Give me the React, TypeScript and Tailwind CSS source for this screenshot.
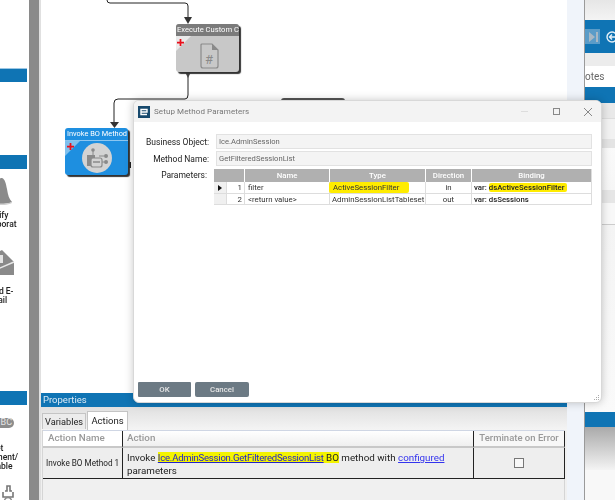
const font = { fontFamily: 'Roboto, "Noto Sans", sans-serif' };

function ClippedLabel({ lines, className }: { lines: string[]; className: string }) {
  return (
    <div className={`w-[60px] -ml-[33px] text-center text-[8.5px] leading-[9px] font-medium text-[#222] blur-[0.3px] ${className}`}>
      {lines.map((l) => (
        <div key={l}>{l}</div>
      ))}
    </div>
  );
}

function LeftPanel() {
  return (
    <div className="w-[27px] shrink-0 overflow-hidden bg-white">
      <div className="mt-[68px] h-[14px] bg-[#0f74b4] border-t border-[#9cc7e4]" />
      <div className="mt-[73px] h-[14px] bg-[#0f74b4]" />
      <svg className="mt-[9px] block" width="27" height="27" viewBox="0 0 27 27">
        <path d="M-14 24 C-8 20 -7 14 -6 8 C-5 3 -1 0 2 0 C5 1 6 6 7 11 C8 17 9 21 12 24 C6 27 -8 27 -14 24Z" fill="#8b8b8b" />
        <path d="M-10 24 C-3 26 6 26 12 24 L12 25 C6 28 -6 28 -10 25Z" fill="#d0d0d0" />
      </svg>
      <ClippedLabel lines={["Notify", "Collaborat", "e"]} className="mt-[6px]" />
      <svg className="mt-[12px] block" width="27" height="27" viewBox="0 0 27 27">
        <path d="M-14 8 L2 0 L14 12 L14 25 L-14 25Z" fill="#8a8a8a" />
        <path d="M-14 10 L0 18 L14 12" fill="none" stroke="#e8e8e8" strokeWidth="1.5" />
        <rect x="-6" y="5" width="9" height="8" fill="#e4e4e4" />
      </svg>
      <div className="mt-[10px] w-[60px] -ml-[31px] text-center text-[8.5px] leading-[9px] font-medium text-[#222] blur-[0.3px]">
        <div>Send E-</div>
        <div>mail</div>
      </div>
      <div className="mt-[86px] h-[14px] bg-[#0f74b4]" />
      <div className="mt-[13px] -ml-[12px] flex h-[10px] w-[26px] items-center justify-end rounded-full bg-[#8c8c8c] pr-[2px] text-[9px] text-[#e6e6e6]">
        BC
      </div>
      <ClippedLabel lines={["Set", "Document/", "Variable"]} className="mt-[16px]" />
      <svg className="mt-[14px] block" width="27" height="16" viewBox="0 0 27 16">
        <path d="M5 6 H7 V1 H10 V6 H12 M3 7 V12 H13 V7" fill="none" stroke="#777" strokeWidth="1.6" />
        <circle cx="8" cy="16" r="3.5" fill="none" stroke="#888" strokeWidth="1.4" />
      </svg>
    </div>
  );
}

function Connectors() {
  return (
    <svg className="absolute inset-0" width="530" height="200" viewBox="42 0 530 200" fill="none">
      <path d="M108 0 Q108 3 111 3 H186 Q189 3 189 6 V18" stroke="#222" strokeWidth="1" />
      <path d="M185 17 H193 L189 24Z" fill="#333" />
      <path d="M189 72 V95 Q189 99 186 99 H119 Q115 99 115 103 V122" stroke="#222" strokeWidth="1" />
      <path d="M186 72 H192 L189 78Z" fill="#444" />
      <path d="M111 122 H120 L115.5 128Z" fill="#333" />
      <rect x="129" y="162" width="3" height="6" fill="#222" />
    </svg>
  );
}

function ExecuteNode() {
  return (
    <div className="absolute left-[135px] top-[24px] flex h-[48px] w-[63px] flex-col overflow-hidden rounded-[3px] bg-[#c8c8c8] shadow-[2px_2px_1px_#333]">
      <div className="h-[12px] shrink-0 overflow-hidden whitespace-nowrap bg-[#7b7b7b] pl-[1px] text-[7.6px] leading-[12px] text-white blur-[0.3px]">
        Execute Custom Code
      </div>
      <div className="relative flex flex-1 items-center justify-center">
        <div className="absolute left-0 top-0 h-0 w-0 border-r-[15px] border-t-[15px] border-r-transparent border-t-[#eaeaea]" />
        <svg className="absolute left-[1px] top-[3px]" width="7" height="7" viewBox="0 0 8 8" fill="#e8101c">
          <path d="M3 0 H5 V3 H8 V5 H5 V8 H3 V5 H0 V3 H3Z" />
        </svg>
        <svg className="ml-[5px] mt-[3px]" width="20" height="26" viewBox="0 0 20 26" fill="none">
          <path d="M2 1 H12 L18 7 V23 Q18 25 16 25 H3 Q1 25 1 23 V2 Q1 1 2 1Z" stroke="#8a8a8a" strokeWidth="1.2" />
          <path d="M12 1 V7 H18Z" fill="#8a8a8a" />
          <text x="5" y="21" fontSize="13" fill="#8a8a8a" fontFamily="Roboto">#</text>
        </svg>
      </div>
    </div>
  );
}

function InvokeNode() {
  return (
    <div className="absolute left-[24px] top-[128px] flex h-[47px] w-[63px] flex-col overflow-hidden rounded-[3px] bg-[#1e8fe0] shadow-[2px_2px_1px_#333]">
      <div className="h-[13px] shrink-0 overflow-hidden whitespace-nowrap border-b border-[#8cc6f0] pl-[2px] text-[7.4px] leading-[12px] text-white blur-[0.3px]">
        Invoke BO Method
      </div>
      <div className="relative flex flex-1 items-center justify-center">
        <div className="absolute left-0 top-0 h-0 w-0 border-r-[15px] border-t-[15px] border-r-transparent border-t-[#7fc0ee]" />
        <svg className="absolute left-[2px] top-[2px]" width="7" height="7" viewBox="0 0 8 8" fill="#e8101c">
          <path d="M3 0 H5 V3 H8 V5 H5 V8 H3 V5 H0 V3 H3Z" />
        </svg>
        <svg className="ml-[1px]" width="32" height="32" viewBox="0 0 32 32" fill="none">
          <circle cx="16" cy="16" r="15" fill="#d3d3d3" />
          <circle cx="12" cy="8" r="1.8" fill="#8a8a8a" />
          <path d="M12 9 V13" stroke="#8a8a8a" />
          <rect x="6" y="13" width="8" height="11" fill="#8a8a8a" />
          <rect x="10" y="16" width="11" height="9" rx="2" fill="#d3d3d3" stroke="#8a8a8a" strokeWidth="1.2" />
          <path d="M12 20 H19" stroke="#8a8a8a" strokeWidth="1.5" />
          <circle cx="25" cy="14" r="2" fill="#8a8a8a" />
          <circle cx="25" cy="20" r="2" fill="#8a8a8a" />
          <path d="M18 14 H23 M21 20 H23" stroke="#8a8a8a" />
        </svg>
      </div>
    </div>
  );
}

function PropertiesPanel() {
  return (
    <div className="flex min-h-0 flex-1 flex-col bg-[#f0f0f0]">
      <div className="h-[14px] shrink-0 bg-[#0f74b4] pl-[2px] text-[9.5px] leading-[14px] text-[#dcebf6] blur-[0.3px]">Properties</div>
      <div className="flex h-[23px] shrink-0 items-end gap-[1px] bg-gradient-to-b from-[#e0e0e0] to-[#f4f4f4] pl-[1px]">
        <div className="mb-[1px] h-[16px] w-[44px] border border-b-0 border-[#c4c4c4] bg-[#ececec] text-center text-[9.2px] leading-[16px] text-[#222] blur-[0.3px]">
          Variables
        </div>
        <div className="h-[19px] w-[41px] border border-b-0 border-[#c4c4c4] bg-white text-center text-[9.5px] leading-[17px] text-[#222] blur-[0.3px]">
          Actions
        </div>
      </div>
      <div className="ml-[1px] mr-[2px] flex-1 border-l border-r border-[#d5d5d5]">
        <div className="grid grid-cols-[80px_351px_91px] border-t border-[#cfd6e4] text-[9.8px]">
          <div className="flex h-[17px] items-center border-b-2 border-r border-[#c8c8c8] border-r-[#222] bg-white pl-[5px] font-medium text-[#999] blur-[0.3px]">
            Action Name
          </div>
          <div className="flex h-[17px] items-center border-b-2 border-r border-[#c8c8c8] border-r-[#222] bg-gradient-to-b from-white to-[#efefef] pl-[4px] font-medium text-[#999] blur-[0.3px]">
            Action
          </div>
          <div className="flex h-[17px] items-center justify-center whitespace-nowrap border-b-2 border-r border-[#c8c8c8] border-r-[#222] bg-[#f7f7f7] text-[9.5px] font-medium text-[#999] blur-[0.3px]">
            Terminate on Error
          </div>
          <div className="flex h-[31px] items-center whitespace-nowrap border-b border-r border-[#222] bg-[#eeeeee] pl-[3px] text-[8.2px] text-[#222] blur-[0.3px]">
            Invoke BO Method 1
          </div>
          <div className="h-[31px] whitespace-nowrap border-b border-r border-[#222] bg-[#eeeeee] pl-[4px] pt-[3px] text-[9.8px] leading-[13px] text-[#222] blur-[0.3px]">
            Invoke <span className="bg-[#f4f400]"> <span className="text-[9.5px] tracking-[-0.2px] text-[#2222cc] underline">Ice.AdminSession.GetFilteredSessionList</span> BO</span> method with{" "}
            <span className="text-[#3333ee] underline">configured</span>
            <br />
            parameters
          </div>
          <div className="flex h-[31px] items-center justify-center border-b border-r border-[#222] bg-[#eeeeee]">
            <div className="h-[10px] w-[10px] border border-[#777] bg-[#f8f8f8]" />
          </div>
        </div>
      </div>
    </div>
  );
}

function RightPanel() {
  return (
    <div className="flex w-[31px] shrink-0 flex-col overflow-hidden border-l border-[#9a9a9a] bg-white">
      <div className="h-[20px] shrink-0 bg-gradient-to-b from-[#e6e6e6] to-[#f4f4f4]" />
      <div className="flex h-[33px] shrink-0 items-center gap-[6px] bg-[#0f74b4]">
        <div className="flex h-[15px] w-[15px] shrink-0 items-center justify-center bg-[#5a9cc8]">
          <svg width="10" height="10" viewBox="0 0 10 10">
            <path d="M1 0 L7 5 L1 10Z M8 0 H10 V10 H8Z" fill="#a8b8c4" />
          </svg>
        </div>
        <svg className="shrink-0" width="12" height="12" viewBox="0 0 12 12" fill="none">
          <circle cx="6" cy="6" r="5" stroke="#e4f0f8" strokeWidth="1.4" />
          <path d="M9 6 H4 M6 3.5 L3.5 6 L6 8.5" stroke="#e4f0f8" strokeWidth="1.4" />
        </svg>
      </div>
      <div className="h-[13px] shrink-0 bg-[#ececec]" />
      <div className="h-[21px] shrink-0 whitespace-nowrap text-[10px] leading-[21px] text-[#666] blur-[0.3px]">otes</div>
      <div className="h-[16px] shrink-0 bg-[#0f74b4]" />
      <div className="h-[15px] shrink-0 bg-[#e9e9e9]" />
      <div className="h-[21px] shrink-0 border-t border-[#ddd] bg-[#f2f2f2]" />
      <div className="h-[9px] shrink-0 bg-[#e4e4e4]" />
      <div className="h-[42px] shrink-0 bg-gradient-to-b from-[#fafafa] to-[#f6f6f6]" />
      <div className="h-[13px] shrink-0 bg-[#e6e6e6]" />
      <div className="h-[21px] shrink-0 bg-[#f8f8f8]" />
      <div className="h-[188px] shrink-0 border-t border-[#ccc] bg-gradient-to-b from-[#f4f4f4] to-[#fafafa]" />
      <div className="h-[15px] shrink-0 bg-[#0f74b4]" />
      <div className="h-[43px] shrink-0 bg-gradient-to-b from-[#aaaaaa] to-[#f4f4f4]" />
      <div className="flex-1 bg-[#f8f8f8]" />
    </div>
  );
}

function Dialog() {
  return (
    <div className="absolute left-[133px] top-[100px] flex h-[303px] w-[469px] flex-col overflow-hidden rounded-[6px] border border-[#d8d8d8] bg-white shadow-[0_0_8px_rgba(0,0,0,0.22)]">
      <div className="flex h-[21px] shrink-0 items-center bg-[#f3f3f3] pl-[4px] pr-[9px]">
        <svg width="12" height="12" viewBox="0 0 12 12" fill="none">
          <rect width="12" height="12" fill="#17496d" />
          <path d="M3 6 H9 V3.5 H3 V8.5 H9" stroke="white" strokeWidth="1.4" />
        </svg>
        <span className="ml-[4px] flex-1 text-[8px] tracking-[0.1px] text-[#777] blur-[0.3px]">Setup Method Parameters</span>
        <div className="mr-[25px] h-px w-[7px] bg-[#ddd]" />
        <div className="mr-[24px] h-[7px] w-[7px] border border-[#888]" />
        <svg width="8" height="8" viewBox="0 0 8 8" stroke="#888">
          <path d="M0 0 L8 8 M8 0 L0 8" />
        </svg>
      </div>
      <div className="flex flex-1 flex-col pl-[4px] pr-[9px] pt-[12px]">
        <div className="flex items-center gap-[7px]">
          <div className="w-[71px] whitespace-nowrap text-right text-[8.5px] leading-[14px] text-[#222] blur-[0.3px]">Business Object:</div>
          <div className="h-[15px] flex-1 border border-[#e2e2e2] bg-[#f4f4f4] pl-[2px] text-[7.6px] leading-[13px] text-[#666] blur-[0.3px]">Ice.AdminSession</div>
        </div>
        <div className="mt-[2px] flex items-center gap-[7px]">
          <div className="w-[71px] whitespace-nowrap text-right text-[8.5px] leading-[14px] text-[#222] blur-[0.3px]">Method Name:</div>
          <div className="h-[15px] flex-1 border border-[#e2e2e2] bg-[#f4f4f4] pl-[2px] text-[7.6px] leading-[13px] text-[#666] blur-[0.3px]">GetFilteredSessionList</div>
        </div>
        <div className="mt-[3px] flex items-start gap-[7px]">
          <div className="w-[71px] whitespace-nowrap text-right text-[8.5px] leading-[12px] text-[#222] blur-[0.3px]">Parameters:</div>
          <div className="grid flex-1 grid-cols-[13px_18px_85px_96px_46px_119px] border-b border-r border-[#ddd] text-[7.8px] leading-[11px] text-[#333] blur-[0.3px]">
            <div className="col-span-2 h-[13px] border-r border-white bg-[#b0b0b0]" />
            <div className="h-[13px] border-r border-white bg-[#b0b0b0] text-center font-medium leading-[13px] text-white">Name</div>
            <div className="h-[13px] border-r border-white bg-[#b0b0b0] text-center font-medium leading-[13px] text-white">Type</div>
            <div className="h-[13px] border-r border-white bg-[#b0b0b0] text-center font-medium leading-[13px] text-white">Direction</div>
            <div className="h-[13px] bg-[#b0b0b0] text-center font-medium leading-[13px] text-white">Binding</div>

            <div className="flex h-[11px] items-center justify-center border-r border-[#ddd] bg-[#f0f0f0]">
              <div className="h-0 w-0 border-y-[3.5px] border-l-[4px] border-y-transparent border-l-[#111]" />
            </div>
            <div className="h-[11px] border-r border-[#ddd] pr-[2px] text-right">1</div>
            <div className="h-[11px] border-r border-[#ddd] pl-[3px]">filter</div>
            <div className="h-[11px] border-r border-[#ddd]"><span className="ml-[-1px] inline-block rounded-[2px] bg-[#ffec00] pl-[4px] pr-[10px]">ActiveSessionFilter</span></div>
            <div className="h-[11px] border-r border-[#ddd] text-center">in</div>
            <div className="h-[11px] whitespace-nowrap pl-[2px] font-medium text-[#222]">var: <span className="rounded-[2px] bg-[#ffec00] pr-[3px]">dsActiveSessionFilter</span></div>

            <div className="h-[11px] border-r border-t border-[#ddd] bg-[#f0f0f0]" />
            <div className="h-[11px] border-r border-t border-[#ddd] pr-[2px] text-right">2</div>
            <div className="h-[11px] border-r border-t border-[#ddd] pl-[3px]">&lt;return value&gt;</div>
            <div className="h-[11px] overflow-hidden whitespace-nowrap border-r border-t border-[#ddd] pl-[2px]">AdminSessionListTableset</div>
            <div className="h-[11px] border-r border-t border-[#ddd] text-center">out</div>
            <div className="h-[11px] whitespace-nowrap border-t border-[#ddd] pl-[2px] font-medium text-[#222]">var: dsSessions</div>
          </div>
        </div>
        <div className="mt-auto mb-[5px] flex gap-[4px]">
          <div className="h-[15px] w-[53px] rounded-[1px] bg-[#6c7a84] text-center text-[7.8px] font-medium leading-[15px] text-[#e6e6e6] blur-[0.2px]">OK</div>
          <div className="h-[15px] w-[54px] rounded-[2px] bg-[#6c7a84] text-center text-[7.8px] font-medium leading-[15px] text-[#e6e6e6] blur-[0.2px]">Cancel</div>
        </div>
      </div>
      <svg className="absolute bottom-[1px] right-[1px]" width="7" height="7" viewBox="0 0 7 7" fill="#aaa">
        <rect x="5" y="1" width="1" height="1" />
        <rect x="3" y="3" width="1" height="1" />
        <rect x="5" y="3" width="1" height="1" />
        <rect x="1" y="5" width="1" height="1" />
        <rect x="3" y="5" width="1" height="1" />
        <rect x="5" y="5" width="1" height="1" />
      </svg>
    </div>
  );
}

export default function App() {
  return (
    <div className="relative flex h-[500px] w-[616px] overflow-hidden bg-white" style={font}>
      <LeftPanel />
      <div className="w-[2px] shrink-0 bg-white" />
      <div className="w-[10px] shrink-0 bg-[#8a8a8a]" />
      <div className="w-[2px] shrink-0 bg-[#e0e0e0]" />
      <div className="flex w-[526px] shrink-0 flex-col">
        <div className="relative h-[393px] shrink-0 bg-white">
          <Connectors />
          <ExecuteNode />
          <InvokeNode />
          <div className="absolute left-[240px] top-[98px] h-[8px] w-[64px] rounded-[3px] bg-[#555]" />
        </div>
        <PropertiesPanel />
      </div>
      <div className="w-[17px] shrink-0 bg-[#f0f4fa]" />
      <RightPanel />
      <Dialog />
    </div>
  );
}
